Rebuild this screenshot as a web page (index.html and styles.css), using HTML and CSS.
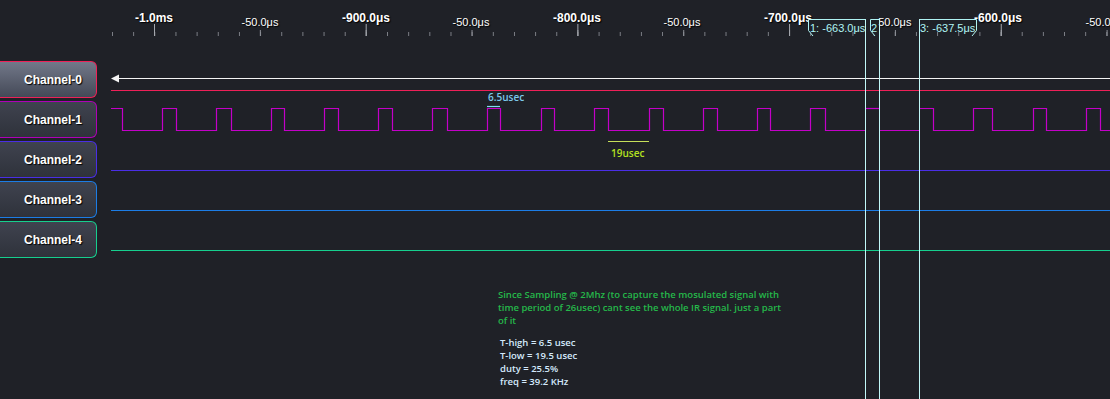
FILE: index.html
```html
<!DOCTYPE html>
<html lang="en">
<head>
    <meta charset="UTF-8">
    <meta name="viewport" content="width=device-width, initial-scale=1.0">
    <title>Logic Analyzer - IR capture</title>
    <link rel="stylesheet" href="styles.css">
</head>
<body>
    <main class="app">
        <!-- time ruler -->
        <header class="ruler">
            <div class="ticks"></div>
            <span class="major" style="left: 154px;">-1.0ms</span>
            <span class="minor" style="left: 260px;">-50.0μs</span>
            <span class="major" style="left: 366px;">-900.0μs</span>
            <span class="minor" style="left: 471px;">-50.0μs</span>
            <span class="major" style="left: 577px;">-800.0μs</span>
            <span class="minor" style="left: 682px;">-50.0μs</span>
            <span class="major" style="left: 788px;">-700.0μs</span>
            <span class="minor" style="left: 893px;">-50.0μs</span>
            <span class="major" style="left: 998px;">-600.0μs</span>
            <span class="minor" style="left: 1104px;">-50.0μs</span>
        </header>

        <!-- channel buttons -->
        <nav class="channels">
            <button class="channel ch0 active">Channel-0</button>
            <button class="channel ch1">Channel-1</button>
            <button class="channel ch2">Channel-2</button>
            <button class="channel ch3">Channel-3</button>
            <button class="channel ch4">Channel-4</button>
        </nav>

        <!-- traces -->
        <section class="plot">
            <svg class="traces" width="1013" height="341" viewBox="97 58 1013 341">
                <!-- trigger arrow -->
                <line x1="117" y1="78.5" x2="1110" y2="78.5" stroke="#f4f4f4" stroke-width="1"/>
                <polygon points="111,78.5 119,74.5 119,82.5" fill="#f4f4f4"/>

                <line x1="111" y1="90.5" x2="1110" y2="90.5" stroke="#ee2058" stroke-width="1.2"/>

                <polyline fill="none" stroke="#c400c8" stroke-width="1.2" points="
                    111,108.5 122.5,108.5 122.5,130.5 162.5,130.5 162.5,108.5 176.5,108.5 176.5,130.5
                    216.5,130.5 216.5,108.5 231.5,108.5 231.5,130.5 271.5,130.5 271.5,108.5 284.5,108.5 284.5,130.5
                    324.5,130.5 324.5,108.5 338.5,108.5 338.5,130.5 378.5,130.5 378.5,108.5 392.5,108.5 392.5,130.5
                    432.5,130.5 432.5,108.5 447.5,108.5 447.5,130.5 487.5,130.5 487.5,108.5 500.5,108.5 500.5,130.5
                    541.5,130.5 541.5,108.5 554.5,108.5 554.5,130.5 594.5,130.5 594.5,108.5 608.5,108.5 608.5,130.5
                    649.5,130.5 649.5,108.5 663.5,108.5 663.5,130.5 703.5,130.5 703.5,108.5 717.5,108.5 717.5,130.5
                    757.5,130.5 757.5,108.5 770.5,108.5 770.5,130.5 810.5,130.5 810.5,108.5 825.5,108.5 825.5,130.5
                    865,130.5"/>
                <line x1="866" y1="108.5" x2="879" y2="108.5" stroke="#c400c8" stroke-width="1.2"/>
                <line x1="880" y1="130.5" x2="919" y2="130.5" stroke="#c400c8" stroke-width="1.2"/>
                <polyline fill="none" stroke="#c400c8" stroke-width="1.2" points="
                    919,108.5 933.5,108.5 933.5,130.5 973.5,130.5 973.5,108.5 992.5,108.5 992.5,130.5
                    1033.5,130.5 1033.5,108.5 1046.5,108.5 1046.5,130.5 1086.5,130.5 1086.5,108.5 1100.5,108.5 1100.5,130.5
                    1110,130.5"/>

                <line x1="111" y1="170.5" x2="1110" y2="170.5" stroke="#4a2ee6" stroke-width="1.2"/>
                <line x1="111" y1="210.5" x2="1110" y2="210.5" stroke="#1c7de6" stroke-width="1.2"/>
                <line x1="111" y1="250.5" x2="1110" y2="250.5" stroke="#16cf8e" stroke-width="1.2"/>

                <!-- measurements -->
                <text class="meas high" x="488" y="101">6.5usec</text>
                <line x1="487" y1="106.5" x2="500" y2="106.5" stroke="#80dcf0" stroke-width="1.2"/>
                <line x1="608" y1="141.5" x2="649" y2="141.5" stroke="#c6e05a" stroke-width="1.2"/>
                <text class="meas low" x="611" y="157">19usec</text>
            </svg>

            <div class="note">
                <p class="note-text">Since Sampling @ 2Mhz (to capture the mosulated signal with
time period of 26usec) cant see the whole IR signal. just a part
of it</p>
                <p class="note-values">T-high = 6.5 usec
T-low = 19.5 usec
duty = 25.5%
freq = 39.2 KHz</p>
            </div>
        </section>

        <!-- cursors -->
        <svg class="cursors" width="1110" height="399" viewBox="0 0 1110 399">
            <path d="M865.5,19.5 H808.5 V30.5 L813,36" fill="#1e2026" stroke="#b0f4f4"/>
            <path d="M879.5,19.5 H870.5 V30.5 L875,36" fill="#1e2026" stroke="#b0f4f4"/>
            <path d="M919.5,19.5 H976.5 V30.5 L972,36" fill="#1e2026" stroke="#b0f4f4"/>
            <line x1="865.5" y1="19" x2="865.5" y2="399" stroke="#c0f8f8"/>
            <line x1="879.5" y1="19" x2="879.5" y2="399" stroke="#c0f8f8"/>
            <line x1="919.5" y1="19" x2="919.5" y2="399" stroke="#c0f8f8"/>
            <text class="cursor-label" x="810" y="32">1: -663.0μs</text>
            <text class="cursor-label" x="871" y="32">2</text>
            <text class="cursor-label" x="920" y="32">3: -637.5μs</text>
        </svg>
    </main>
</body>
</html>
```

FILE: styles.css
```css
body {
    margin: 0;
    background-color: #1f2127;
    font-family: 'Liberation Sans', Arial, sans-serif;
    color: #fff;
}
.app {
    position: relative;
    display: grid;
    grid-template-columns: 97px 1fr;
    grid-template-rows: 58px 341px;
    width: 1110px;
    height: 399px;
    overflow: hidden;
}

/* ruler */
.ruler {
    grid-column: 1 / -1;
    position: relative;
}
.ticks {
    position: absolute;
    left: 112px;
    right: 0;
    top: 24px;
    height: 12px;
    background:
        linear-gradient(to right, #a4a7ad 1px, transparent 1px) 42px 0 / 211.7px 12px repeat-x,
        linear-gradient(to right, #8e9198 1px, transparent 1px) 42px 6px / 105.85px 6px repeat-x,
        linear-gradient(to right, #7d8087 1px, transparent 1px) 0 8px / 21.17px 4px repeat-x;
}
.major, .minor {
    position: absolute;
    transform: translateX(-50%);
    white-space: nowrap;
    color: #fff;
    text-shadow: 1px 1px 1px #000;
}
.major {
    top: 11px;
    font-size: 12px;
    line-height: 14px;
    font-weight: bold;
}
.minor {
    top: 16px;
    font-size: 11px;
    line-height: 13px;
}

/* channel buttons */
.channels {
    display: flex;
    flex-direction: column;
    gap: 3px;
    padding-top: 3px;
}
.channel {
    height: 37px;
    width: 97px;
    padding: 0 0 0 10px;
    border: 1px solid;
    border-left: none;
    border-radius: 0 6px 6px 0;
    background: linear-gradient(#3f434f, #2f323b);
    color: #fff;
    font-family: 'Liberation Sans', Arial, sans-serif;
    font-size: 12px;
    font-weight: bold;
    text-shadow: 1px 1px 1px #000;
    cursor: pointer;
}
.channel.active {
    background: linear-gradient(#727889, #444957);
}
.ch0 { border-color: #ee2058; }
.ch1 { border-color: #b000b8; }
.ch2 { border-color: #4a2ee6; }
.ch3 { border-color: #1c7de6; }
.ch4 { border-color: #16cf8e; }

/* plot */
.plot {
    position: relative;
}
.traces {
    display: block;
}
.meas {
    font-family: 'Open Sans', sans-serif;
    font-size: 10px;
    font-weight: 600;
}
.meas.high { fill: #7cc8ea; }
.meas.low { fill: #b4e020; }

.note {
    position: absolute;
    left: 401px;
    top: 230px;
    font-family: 'Open Sans', sans-serif;
    font-size: 9.5px;
    font-weight: 600;
    line-height: 13px;
}
.note p {
    margin: 0;
    white-space: pre-line;
}
.note-text {
    color: #25b84a;
}
.note-values {
    margin-top: 9px !important;
    padding-left: 2px;
    color: #d4eafc;
}

/* cursors */
.cursors {
    position: absolute;
    left: 0;
    top: 0;
    pointer-events: none;
}
.cursor-label {
    fill: #b0f4f4;
    font-family: 'Liberation Sans', Arial, sans-serif;
    font-size: 11px;
}
```
